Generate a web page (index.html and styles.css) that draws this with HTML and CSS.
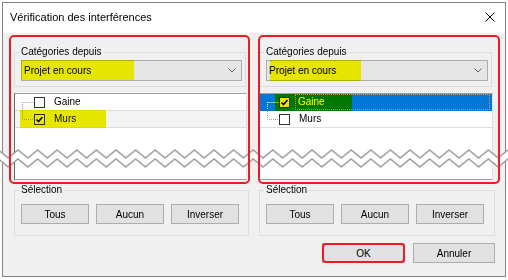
FILE: index.html
```html
<!DOCTYPE html>
<html lang="fr">
<head>
    <meta charset="UTF-8">
    <title>Vérification des interférences</title>
    <link rel="stylesheet" href="styles.css">
</head>
<body>
    <div class="dialog">
        <div class="titlebar">
            <span class="title">Vérification des interférences</span>
            <svg class="close" width="10" height="10" viewBox="0 0 10 10"><path d="M0.5 0.5L9.5 9.5M9.5 0.5L0.5 9.5"/></svg>
        </div>

        <div class="content">
            <div class="columns">
                <!-- left list -->
                <div class="col">
                    <fieldset class="group group-cat">
                        <legend>Catégories depuis</legend>
                        <div class="combo">
                            <span class="combo-text">Projet en cours</span>
                            <svg class="chevron" width="8" height="5" viewBox="0 0 8 5"><path d="M0.5 0.5L4 4L7.5 0.5"/></svg>
                            <span class="hl hl-combo-left"></span>
                        </div>
                    </fieldset>
                    <div class="tree">
                        <div class="row">
                            <svg class="branch" width="19" height="16"><path d="M7.5 8V16M7.5 8.5H19"/></svg>
                            <span class="check"></span>
                            <span class="label">Gaine</span>
                        </div>
                        <div class="row row-inactive">
                            <svg class="branch" width="19" height="16"><path d="M7.5 0V8.5H19"/></svg>
                            <span class="check"><svg width="9" height="9" viewBox="0 0 9 9"><path d="M1.5 4.5L3.5 6.5L7.5 2"/></svg></span>
                            <span class="label">Murs</span>
                            <span class="hl hl-row-left"></span>
                        </div>
                    </div>
                    <fieldset class="group group-sel">
                        <legend>Sélection</legend>
                        <div class="btns">
                            <button class="btn">Tous</button>
                            <button class="btn">Aucun</button>
                            <button class="btn">Inverser</button>
                        </div>
                    </fieldset>
                    <div class="mark mark-left"></div>
                </div>

                <!-- right list -->
                <div class="col">
                    <fieldset class="group group-cat">
                        <legend>Catégories depuis</legend>
                        <div class="combo">
                            <span class="combo-text">Projet en cours</span>
                            <svg class="chevron" width="8" height="5" viewBox="0 0 8 5"><path d="M0.5 0.5L4 4L7.5 0.5"/></svg>
                            <span class="hl hl-combo-right"></span>
                        </div>
                    </fieldset>
                    <div class="tree">
                        <div class="row row-sel">
                            <svg class="branch" width="19" height="16"><path d="M7.5 8V16M7.5 8.5H19"/></svg>
                            <span class="check"><svg width="9" height="9" viewBox="0 0 9 9"><path d="M1.5 4.5L3.5 6.5L7.5 2"/></svg></span>
                            <span class="label label-focus">Gaine</span>
                            <span class="hl hl-row-right"></span>
                        </div>
                        <div class="row">
                            <svg class="branch" width="19" height="16"><path d="M7.5 0V8.5H19"/></svg>
                            <span class="check"></span>
                            <span class="label">Murs</span>
                        </div>
                    </div>
                    <fieldset class="group group-sel">
                        <legend>Sélection</legend>
                        <div class="btns">
                            <button class="btn">Tous</button>
                            <button class="btn">Aucun</button>
                            <button class="btn">Inverser</button>
                        </div>
                    </fieldset>
                    <div class="mark mark-right"></div>
                </div>
            </div>

            <div class="footer">
                <button class="btn btn-wide btn-ok">OK</button>
                <button class="btn btn-wide">Annuler</button>
            </div>
        </div>
    </div>

    <!-- torn edge across the screenshot -->
    <svg class="tear" width="508" height="26">
        <defs>
            <pattern id="zig" patternUnits="userSpaceOnUse" x="8.2" y="0" width="19.6" height="26">
                <path class="tear-fill" d="M-9.8 4L0 12L9.8 4L19.6 12L29.4 4V13L19.6 21L9.8 13L0 21L-9.8 13Z"/>
                <path class="tear-line" d="M-9.8 4L0 12L9.8 4L19.6 12L29.4 4"/>
                <path class="tear-line" d="M-9.8 13L0 21L9.8 13L19.6 21L29.4 13"/>
            </pattern>
        </defs>
        <rect width="508" height="26" fill="url(#zig)"/>
    </svg>
</body>
</html>
```

FILE: styles.css
```css
body {
    margin: 0;
    background-color: #ffffff;
    font-family: "Liberation Sans", Arial, sans-serif;
    font-size: 10px;
    color: #000000;
}
.dialog {
    margin: 2px 0 0 2px;
    width: 502px;
    height: 273px;
    border: 1px solid #858585;
    background-color: #f0f0f0;
    display: flex;
    flex-direction: column;
}
.titlebar {
    height: 30px;
    background-color: #ffffff;
    display: flex;
    align-items: center;
    justify-content: space-between;
    padding: 0 10px 2px 7px;
    box-sizing: border-box;
}
.title {
    font-size: 11px;
}
.close path {
    stroke: #000000;
    stroke-width: 1;
    fill: none;
}
.content {
    flex: 1;
    padding: 12px 10px 0 11px;
}
.columns {
    display: grid;
    grid-template-columns: 235px 236px;
    column-gap: 10px;
}
.col {
    position: relative;
}
.group {
    margin: 0;
    border: 1px solid #dcdcdc;
    min-width: 0;
}
.group legend {
    padding: 0 2px;
    margin-left: -2px;
    line-height: 14px;
}
.group-cat {
    margin-right: 3px;
    padding: 1px 3px 5px 6px;
}
.group-sel {
    margin-top: 3px;
    padding: 7px 6px 11px 6px;
}
.combo {
    position: relative;
    height: 21px;
    box-sizing: border-box;
    border: 1px solid #adadad;
    background-color: #e5e5e5;
    display: flex;
    align-items: center;
    justify-content: space-between;
    padding: 0 5px 0 2px;
}
.chevron path {
    stroke: #606060;
    fill: none;
}
.tree {
    margin: 6px 2px 0 0;
    height: 87px;
    box-sizing: border-box;
    background-color: #ffffff;
    border-top: 1px solid #a0a0a0;
    border-left: 1px solid #646464;
    border-right: 1px solid #e3e3e3;
    border-bottom: 1px solid #a0a0a0;
}
.row {
    position: relative;
    height: 16px;
    border-bottom: 1px solid #dcdcdc;
    display: flex;
    align-items: center;
}
.row-inactive {
    background-color: #f3f3f3;
}
.row-sel {
    background-color: #0078d7;
    border-bottom-color: #0078d7;
    color: #ffffff;
}
.branch {
    flex: none;
}
.branch path {
    stroke: #a0a0a0;
    stroke-dasharray: 1 1;
    fill: none;
}
.row-sel .branch path {
    stroke: #ffffff;
}
.check {
    flex: none;
    width: 11px;
    height: 11px;
    box-sizing: border-box;
    border: 1px solid #333333;
    background-color: #ffffff;
    display: flex;
    align-items: center;
    justify-content: center;
}
.check path {
    stroke: #000000;
    stroke-width: 1.7;
    fill: none;
}
.label {
    margin-left: 6px;
    padding-left: 3px;
    line-height: 16px;
}
.label-focus {
    flex: 1;
    margin-left: 5px;
    margin-right: 2px;
    height: 16px;
    box-sizing: border-box;
    border: 1px dotted #ff8a2a;
    padding-left: 2px;
    line-height: 14px;
}
.btns {
    display: flex;
    gap: 7px;
}
.btn {
    width: 68px;
    height: 20px;
    margin: 0;
    padding: 0;
    border: 1px solid #adadad;
    background-color: #e1e1e1;
    font-family: inherit;
    font-size: 10px;
    color: #000000;
}
.footer {
    margin-top: 7px;
    display: flex;
    justify-content: flex-end;
    gap: 8px;
}
.btn-wide {
    width: 82px;
}
.btn-ok {
    position: relative;
    width: 83px;
}
.btn-ok::after {
    content: "";
    position: absolute;
    inset: -1px;
    border: 2px solid #ec1c24;
    border-radius: 4px;
    z-index: 2;
}

/* highlighter strokes drawn over the screenshot */
.hl {
    position: absolute;
    background-color: #e6e600;
    mix-blend-mode: darken;
}
.hl-combo-left {
    left: -1px;
    top: -1px;
    width: 113px;
    height: 20px;
}
.hl-combo-right {
    left: 3px;
    top: -1px;
    width: 91px;
    height: 21px;
}
.hl-row-left {
    left: 5px;
    top: -1px;
    width: 86px;
    height: 18px;
}
.hl-row-right {
    left: 15px;
    top: 0;
    width: 77px;
    height: 17px;
}

/* red annotation frames */
.mark {
    position: absolute;
    top: -10px;
    height: 149px;
    box-sizing: border-box;
    border: 2px solid #ec1c24;
    border-radius: 5px;
    z-index: 2;
}
.mark-left {
    left: -5px;
    width: 241px;
}
.mark-right {
    left: -1px;
    width: 242px;
}

.tear {
    position: absolute;
    left: 0;
    top: 146px;
    z-index: 1;
}
.tear-fill {
    fill: #ffffff;
}
.tear-line {
    stroke: #9c9c9c;
    stroke-width: 1.5;
    fill: none;
}
```
